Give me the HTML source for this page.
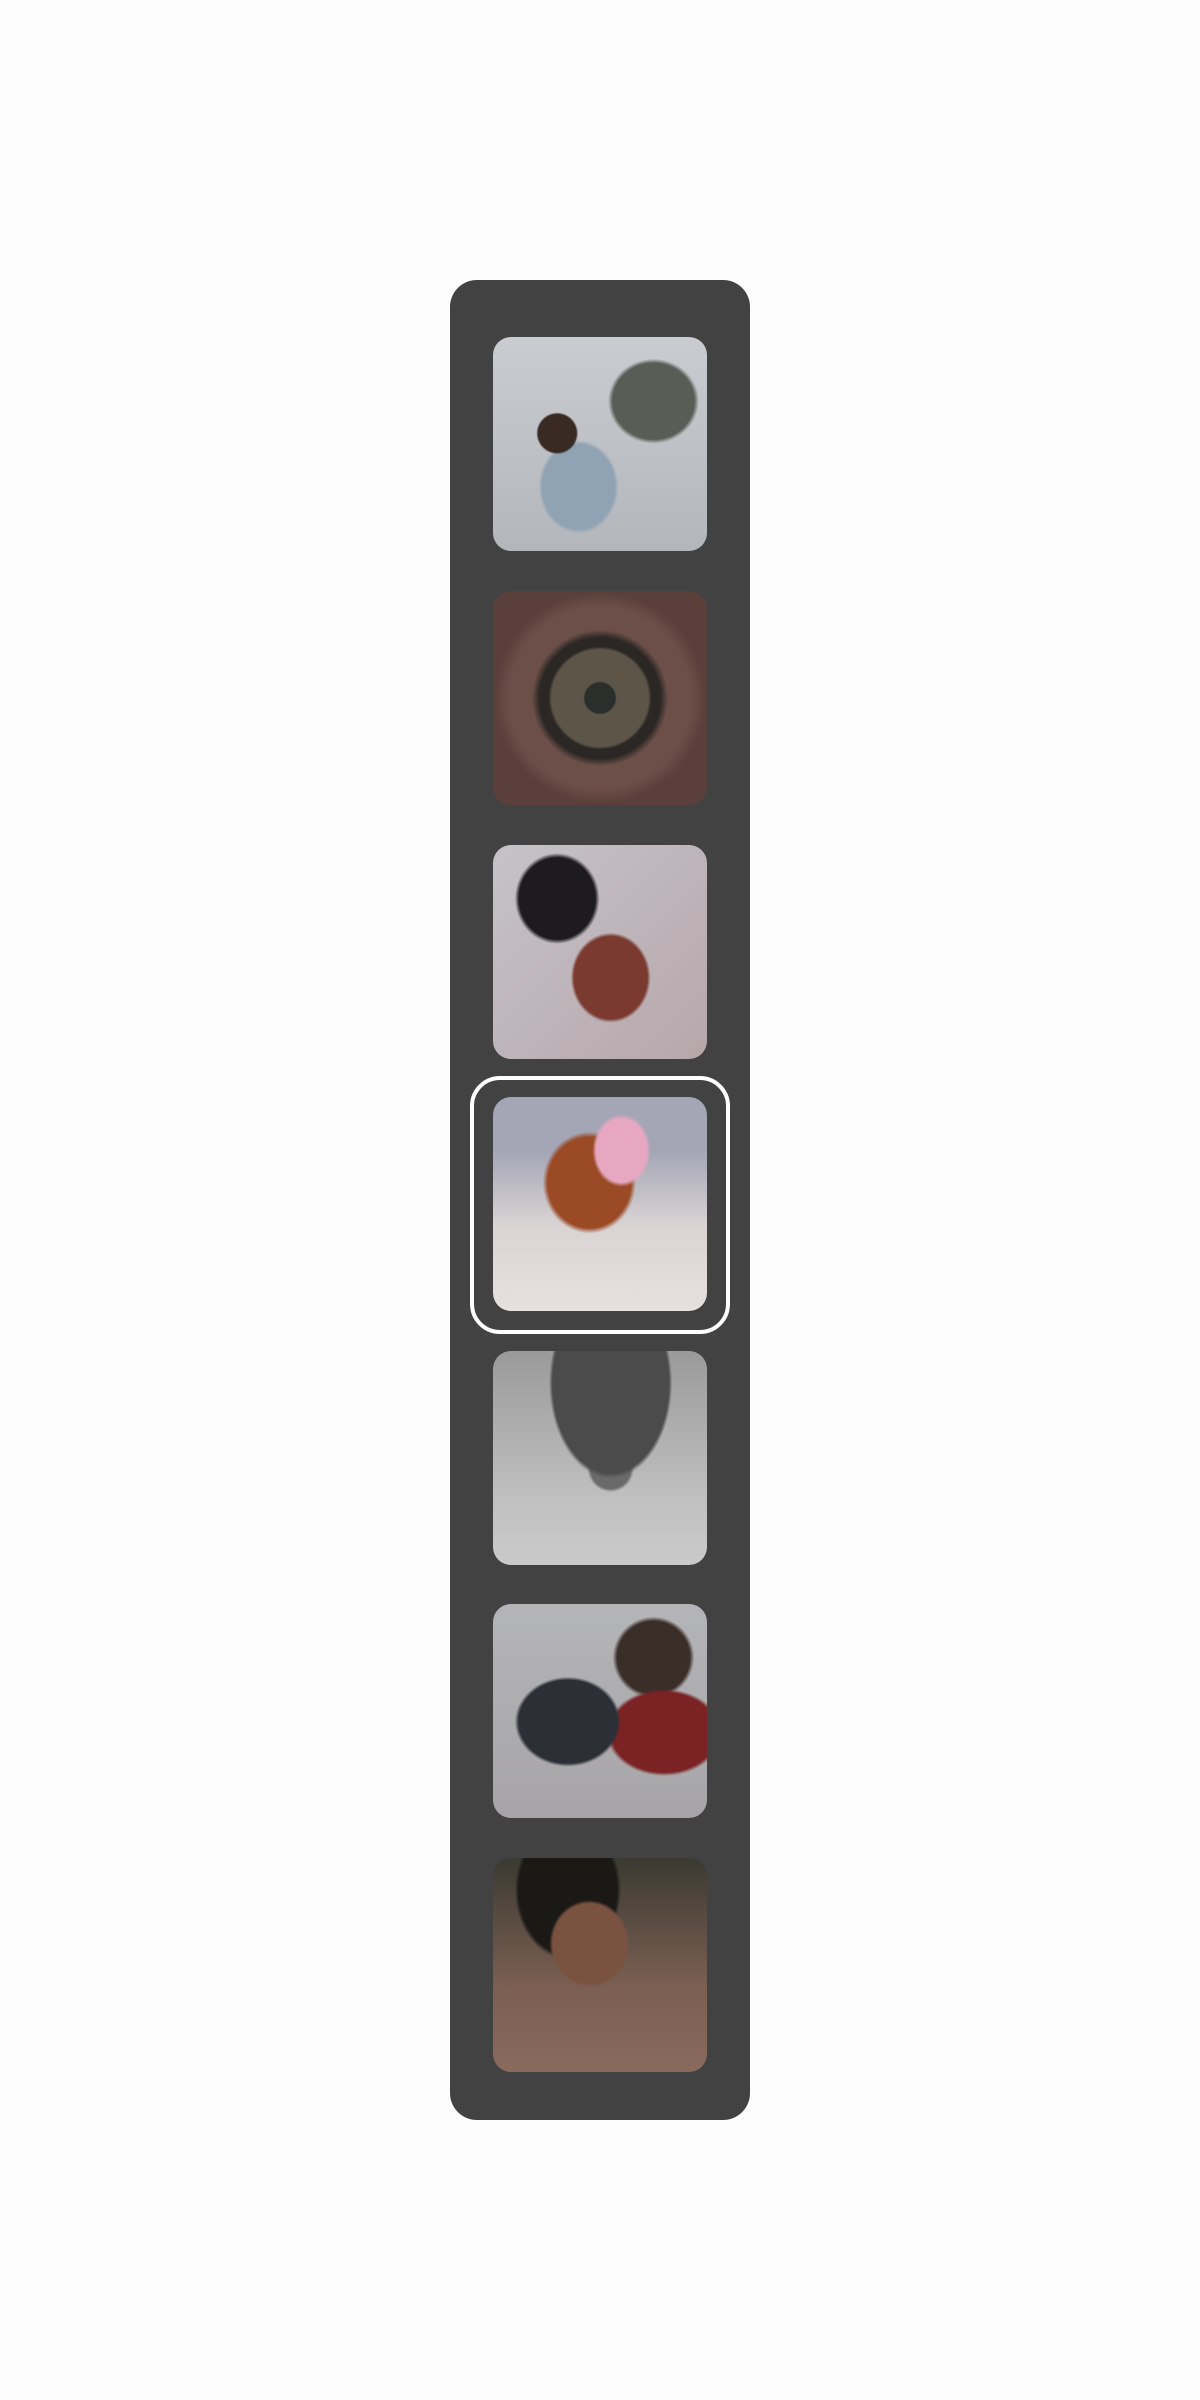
<!DOCTYPE html>
<html><head><meta charset="utf-8"><style>
html,body{margin:0;padding:0;background:#fdfdfd;width:1200px;height:2400px;overflow:hidden}
.panel{position:absolute;left:450px;top:280px;width:300px;height:1840px;background:#424242;border-radius:27px}
.t{position:absolute;left:493px;width:214px;height:214px;border-radius:18px;overflow:hidden}
.ring{position:absolute;left:470px;top:1076px;width:252px;height:250px;border:4.5px solid #fff;border-radius:30px}
</style></head><body>
<div class="panel"></div>
<div class="t" style="top:337px;background:radial-gradient(circle at 30% 45%,#3a2a24 0 10%,transparent 11%),radial-gradient(ellipse at 40% 70%,#8fa3b5 0 20%,transparent 22%),radial-gradient(ellipse at 75% 30%,#5a5d55 0 18%,transparent 20%),linear-gradient(#c9ccd0,#b3b6ba)"></div>
<div class="t" style="top:591px;background:radial-gradient(circle at 50% 50%,#2a2f2c 0 10%,#5c5548 11% 32%,#2b2724 34% 40%,#6c4f48 45% 60%,#5a3f3a 70%)"></div>
<div class="t" style="top:845px;background:radial-gradient(ellipse at 30% 25%,#1d1b1d 0 18%,transparent 20%),radial-gradient(ellipse at 55% 62%,#7a3a30 0 22%,transparent 24%),linear-gradient(135deg,#c5c3c8,#b7a7ab)"></div>
<div class="t" style="top:1097px;background:radial-gradient(ellipse at 60% 25%,#e7a7c0 0 14%,transparent 16%),radial-gradient(ellipse at 45% 40%,#9a4a25 0 25%,transparent 28%),linear-gradient(#a4a6b6 0 25%,#d9d3d3 60%,#e6e0df)"></div>
<div class="t" style="top:1351px;background:radial-gradient(ellipse at 55% 15%,#4b4b4b 0 35%,transparent 37%),radial-gradient(ellipse at 55% 55%,#6a6a6a 0 12%,transparent 14%),linear-gradient(#9a9a9a,#c0c0c0 70%,#cacaca)"></div>
<div class="t" style="top:1604px;background:radial-gradient(ellipse at 35% 55%,#2c3036 0 25%,transparent 27%),radial-gradient(ellipse at 80% 60%,#7a2224 0 22%,transparent 24%),radial-gradient(ellipse at 75% 25%,#3a2e28 0 16%,transparent 18%),linear-gradient(#b4b5b8,#a6a4a6)"></div>
<div class="t" style="top:1858px;background:radial-gradient(ellipse at 45% 40%,#7a5240 0 22%,transparent 24%),radial-gradient(ellipse at 35% 15%,#1b1915 0 25%,transparent 27%),linear-gradient(#3a3a32,#7b5f52 60%,#8a6a5c)"></div>
<div class="ring"></div>
</body></html>
